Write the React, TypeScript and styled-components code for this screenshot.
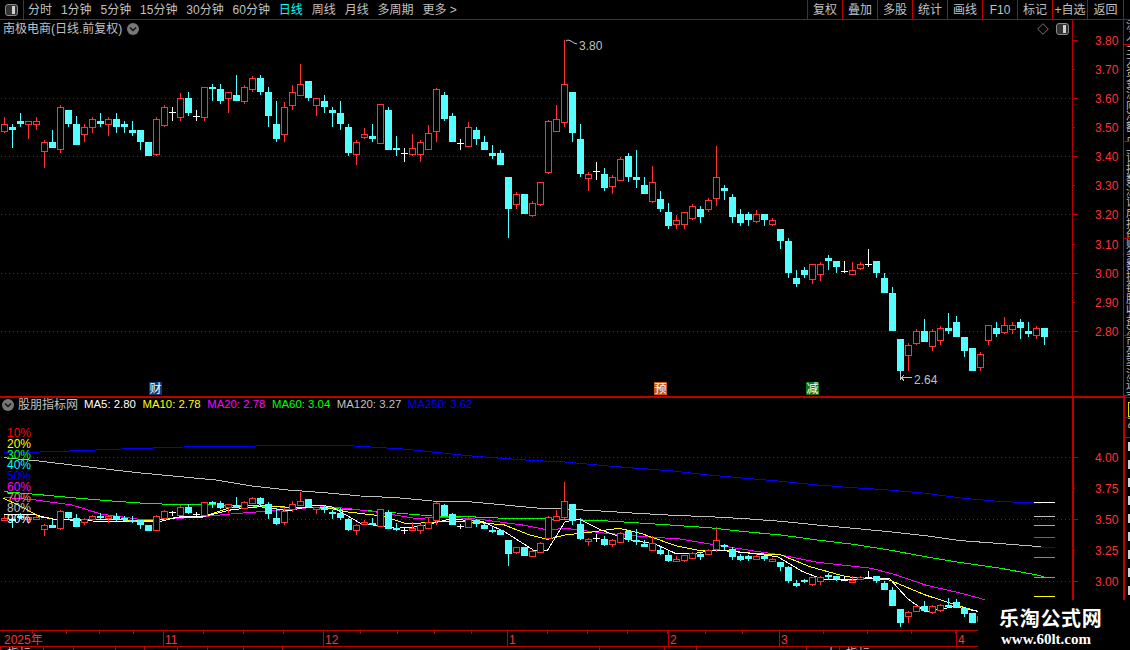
import React from 'react'
import styled, { createGlobalStyle } from 'styled-components'

const RED = '#ff3232'
const LINE_RED = '#c00000'
const GREY = '#c0c0c0'
const CYAN = '#54ffff'
const SANS = `'Liberation Sans', 'Noto Sans CJK SC', sans-serif`

const GlobalStyle = createGlobalStyle`
  html, body {
    margin: 0;
    padding: 0;
    background: #000;
  }
`

const Screen = styled.div`
  position: relative;
  width: 1130px;
  height: 650px;
  overflow: hidden;
  display: flex;
  flex-direction: column;
  background: #000;
  color: ${GREY};
  font: 400 12px/1 ${SANS};
`

const Toolbar = styled.header`
  display: flex;
  align-items: stretch;
  height: 19px;
  flex: none;
  border-bottom: 1px solid ${LINE_RED};
`

const PanelButton = styled.div`
  width: 23px;
  display: flex;
  align-items: center;
  justify-content: center;
  border-right: 1px solid ${LINE_RED};
`

const PeriodList = styled.nav`
  display: flex;
  align-items: center;
  gap: 8.9px;
  padding-left: 4px;
`

const Period = styled.span<{ $active?: boolean }>`
  color: ${(p) => (p.$active ? '#00ffff' : GREY)};
  white-space: nowrap;
`

const ToolGroup = styled.div`
  display: flex;
  margin-left: auto;
`

const ToolButton = styled.div<{ $wide?: boolean }>`
  width: ${(p) => (p.$wide ? 36 : 35)}px;
  box-sizing: border-box;
  display: flex;
  align-items: center;
  justify-content: center;
  border-left: 1px solid ${LINE_RED};
  white-space: nowrap;
`

const ToolEnd = styled.div`
  width: 7px;
  box-sizing: border-box;
  border-left: 1px solid ${LINE_RED};
`

const Workspace = styled.div`
  display: flex;
  flex: 1;
  min-height: 0;
`

const ChartColumn = styled.main`
  width: 1123px;
  display: flex;
  flex-direction: column;
`

const PricePane = styled.section`
  position: relative;
  height: 378px;
  box-sizing: border-box;
  border-bottom: 2px solid ${LINE_RED};
`

const IndicatorPane = styled.section`
  position: relative;
  height: 232px;
`

const ChartSvg = styled.svg`
  display: block;
  width: 1123px;
`

const PaneHeader = styled.div`
  position: absolute;
  top: 2px;
  left: 3px;
  right: 54px;
  display: flex;
  align-items: center;
  gap: 5px;
  height: 14px;
`

const PaneTitle = styled.span`
  white-space: nowrap;
`

const HeaderIcons = styled.div`
  display: flex;
  align-items: center;
  gap: 7px;
  margin-left: auto;
`

const IndicatorHeader = styled.div`
  position: absolute;
  top: 0;
  left: 2px;
  display: flex;
  align-items: center;
  height: 14px;
  gap: 4px;
`

const MaList = styled.div`
  display: flex;
  gap: 6.5px;
  margin-left: 2px;
`

const MaValue = styled.span<{ $color: string }>`
  color: ${(p) => p.$color};
  font-size: 11.4px;
  white-space: nowrap;
`

const PercentScale = styled.ul`
  position: absolute;
  top: 30px;
  left: 7px;
  margin: 0;
  padding: 0;
  list-style: none;
  display: flex;
  flex-direction: column;
`

const PercentItem = styled.li<{ $color: string }>`
  height: 10.75px;
  line-height: 10.75px;
  color: ${(p) => p.$color};
`

const EventBadge = styled.span<{ $left: number; $color: string }>`
  position: absolute;
  left: ${(p) => p.$left}px;
  bottom: 1px;
  width: 13px;
  height: 13px;
  display: flex;
  align-items: center;
  justify-content: center;
  overflow: hidden;
  background: ${(p) => p.$color};
  color: #fff;
  font-size: 12px;
`

const TimeAxis = styled.div`
  display: flex;
  height: 17px;
  box-sizing: border-box;
  flex: none;
  border-top: 1px solid ${LINE_RED};
  border-bottom: 1px solid ${LINE_RED};
`

const MonthCell = styled.div<{ $width: number; $step: number }>`
  width: ${(p) => p.$width}px;
  box-sizing: border-box;
  padding: 3px 0 0 1px;
  color: ${RED};
  border-left: 1px solid ${LINE_RED};
  background-image: repeating-linear-gradient(
    90deg,
    transparent 0 ${(p) => p.$step - 1}px,
    ${LINE_RED} ${(p) => p.$step - 1}px ${(p) => p.$step}px
  );
  background-size: 100% 3px;
  background-repeat: no-repeat;
  &:first-child {
    padding-left: 4px;
    border-left: none;
  }
`

const StatusRow = styled.div`
  display: flex;
  height: 4px;
  overflow: hidden;
`

const StatusCell = styled.div<{ $width: number }>`
  width: ${(p) => p.$width}px;
  flex: none;
  box-sizing: border-box;
  padding-left: 6px;
  border-left: 1px solid ${LINE_RED};
  line-height: 14px;
  white-space: nowrap;
`

const SideStrip = styled.aside`
  width: 7px;
  display: flex;
  flex-direction: column;
  overflow: hidden;
`

const SideBlock = styled.div<{ $height: number; $heavy?: boolean }>`
  height: ${(p) => p.$height}px;
  flex: none;
  box-sizing: border-box;
  overflow: hidden;
  padding-left: 2px;
  border-left: ${(p) => (p.$heavy ? 2 : 1)}px solid ${LINE_RED};
  border-bottom: 1px solid ${LINE_RED};
`

const SideText = styled.div`
  width: 12px;
  font-size: 11px;
  line-height: 11px;
  word-break: break-all;
  color: ${GREY};
`

const SideFlag = styled.div`
  width: 8px;
  height: 15px;
  margin: 4px 0 0 1px;
  box-sizing: border-box;
  border: 1px solid #e0e000;
`

const SideMarks = styled.div`
  flex: 1;
  display: flex;
  flex-direction: column;
  gap: 9px;
  padding: 4px 0 0 3px;
  border-left: 2px solid ${LINE_RED};
`

const SideMark = styled.span`
  display: block;
  width: 3px;
  height: 9px;
  flex: none;
  background: #d4d4d4;
`

const Watermark = styled.div`
  position: absolute;
  right: 0;
  bottom: 0;
  width: 152px;
  height: 50px;
  box-sizing: border-box;
  padding: 7px 0 0 21px;
  background: #000;
  color: #fff;
`

const WatermarkTitle = styled.div`
  font: 700 20px/22px 'Noto Sans CJK SC', sans-serif;
  letter-spacing: 0.7px;
  white-space: nowrap;
`

const WatermarkUrl = styled.div`
  margin: 2px 0 0 2px;
  font: 700 15px/16px 'Liberation Serif', serif;
  white-space: nowrap;
`

const AxisLabel = styled.text`
  fill: ${RED};
  font: 400 12px ${SANS};
`

const PriceNote = styled.text`
  fill: ${GREY};
  font: 400 12px ${SANS};
`

const GridLine = styled.line`
  stroke: ${LINE_RED};
  stroke-dasharray: 1 3;
`

const AxisStroke = styled.path<{ $width?: number }>`
  stroke: ${LINE_RED};
  stroke-width: ${(p) => p.$width ?? 1}px;
  fill: none;
`

const MaLine = styled.polyline<{ $color: string }>`
  fill: none;
  stroke: ${(p) => p.$color};
  stroke-width: 1px;
`

const LegendTick = styled.line<{ $color: string }>`
  stroke: ${(p) => p.$color};
`

// high, body top, body bottom, low, kind. y values are traced at 3x from the price pane
type CandleRow = [number, number, number, number, 'r' | 'c' | 'w']

const CANDLES: CandleRow[] = [
  [352, 373, 392, 398, 'r'], [372, 381, 389, 444, 'c'], [340, 363, 372, 380, 'c'], [363, 364, 373, 417, 'r'],
  [352, 364, 373, 390, 'r'], [420, 427, 452, 503, 'r'], [390, 426, 443, 443, 'c'], [316, 322, 446, 458, 'r'],
  [330, 330, 372, 380, 'c'], [348, 372, 435, 435, 'c'], [372, 382, 401, 426, 'r'], [352, 358, 382, 399, 'r'],
  [340, 363, 372, 381, 'c'], [352, 358, 373, 408, 'r'], [340, 357, 381, 399, 'c'], [363, 372, 381, 399, 'c'],
  [363, 390, 399, 408, 'c'], [390, 390, 426, 450, 'c'], [426, 426, 468, 468, 'c'], [352, 358, 462, 468, 'r'],
  [316, 322, 374, 380, 'r'], [322, 335, 335, 362, 'w'], [280, 295, 350, 362, 'r'], [276, 294, 339, 348, 'c'],
  [330, 349, 349, 362, 'w'], [262, 262, 350, 362, 'r'], [253, 260, 267, 303, 'c'], [252, 267, 303, 312, 'c'],
  [277, 277, 295, 339, 'r'], [225, 285, 303, 303, 'c'], [256, 262, 304, 312, 'r'], [228, 235, 268, 276, 'r'],
  [225, 234, 276, 285, 'c'], [262, 276, 348, 381, 'c'], [303, 372, 417, 426, 'c'], [306, 322, 401, 426, 'r'],
  [255, 277, 314, 330, 'r'], [192, 253, 286, 286, 'r'], [243, 243, 294, 303, 'c'], [295, 295, 314, 348, 'r'],
  [285, 303, 321, 339, 'c'], [321, 330, 339, 381, 'c'], [303, 339, 372, 390, 'c'], [372, 381, 459, 468, 'c'],
  [420, 427, 461, 495, 'r'], [385, 401, 410, 417, 'r'], [372, 408, 417, 426, 'c'], [313, 313, 428, 428, 'r'],
  [321, 330, 450, 450, 'c'], [408, 444, 450, 468, 'c'], [444, 459, 459, 486, 'w'], [403, 444, 461, 468, 'r'],
  [420, 427, 461, 486, 'r'], [376, 400, 446, 450, 'r'], [265, 268, 392, 426, 'r'], [277, 285, 357, 363, 'c'],
  [339, 348, 426, 426, 'c'], [417, 428, 428, 450, 'w'], [366, 382, 437, 437, 'r'], [381, 390, 417, 435, 'c'],
  [408, 426, 450, 450, 'c'], [435, 459, 468, 477, 'c'], [450, 459, 495, 495, 'c'], [531, 531, 627, 713, 'c'],
  [576, 582, 611, 627, 'r'], [582, 582, 642, 642, 'c'], [603, 610, 645, 651, 'r'], [545, 547, 611, 618, 'r'],
  [360, 364, 515, 522, 'r'], [315, 358, 392, 392, 'r'], [120, 253, 365, 380, 'r'], [276, 276, 399, 426, 'c'],
  [372, 417, 522, 531, 'c'], [516, 523, 533, 573, 'r'], [486, 513, 513, 540, 'w'], [504, 522, 564, 573, 'c'],
  [525, 531, 557, 582, 'r'], [470, 477, 541, 541, 'r'], [460, 468, 531, 546, 'c'], [450, 531, 540, 564, 'c'],
  [531, 555, 582, 582, 'c'], [498, 547, 603, 609, 'r'], [573, 597, 627, 635, 'c'], [609, 636, 677, 686, 'c'],
  [645, 660, 672, 686, 'r'], [636, 636, 672, 686, 'r'], [612, 619, 653, 660, 'r'], [618, 627, 651, 668, 'c'],
  [595, 600, 628, 636, 'r'], [438, 532, 594, 617, 'r'], [556, 564, 572, 600, 'c'], [582, 591, 650, 668, 'c'],
  [627, 642, 669, 678, 'c'], [636, 642, 660, 678, 'c'], [630, 642, 663, 669, 'r'], [642, 642, 660, 678, 'c'],
  [654, 660, 672, 678, 'r'], [687, 687, 723, 747, 'c'], [714, 723, 819, 834, 'c'], [810, 834, 852, 861, 'c'],
  [801, 810, 825, 834, 'c'], [793, 793, 837, 852, 'r'], [786, 793, 821, 843, 'r'], [765, 774, 783, 810, 'c'],
  [783, 783, 801, 819, 'c'], [783, 813, 813, 819, 'w'], [786, 810, 821, 825, 'r'], [786, 793, 804, 810, 'r'],
  [747, 793, 793, 801, 'w'], [783, 783, 819, 834, 'c'], [819, 834, 879, 879, 'c'], [861, 879, 993, 993, 'c'],
  [1017, 1017, 1113, 1140, 'c'], [1029, 1035, 1065, 1113, 'r'], [987, 993, 1029, 1035, 'r'], [957, 993, 1026, 1026, 'c'],
  [987, 993, 1038, 1053, 'r'], [978, 984, 1020, 1035, 'r'], [939, 984, 993, 1002, 'c'], [948, 966, 1011, 1011, 'c'],
  [1011, 1011, 1053, 1071, 'c'], [1044, 1044, 1113, 1113, 'c'], [1056, 1062, 1100, 1113, 'r'], [975, 975, 1020, 1035, 'r'],
  [966, 984, 1002, 1011, 'c'], [951, 975, 996, 1002, 'r'], [966, 975, 987, 1002, 'r'], [957, 966, 984, 1017, 'c'],
  [966, 993, 1002, 1011, 'c'], [978, 984, 1004, 1017, 'r'], [984, 984, 1011, 1035, 'c'],
]

type Point = [number, number]

// curves were read off two crops of the lower pane (x 2.775x, y 3x from 390)
function traced(left: Point[], right: Point[]): string {
  const a = left.map(([x, y]) => `${(x / 2.775).toFixed(1)},${(390 + y / 3).toFixed(1)}`)
  const b = right.map(([x, y]) => `${(565 + x / 2.775).toFixed(1)},${(390 + y / 3).toFixed(1)}`)
  return [...a, ...b].join(' ')
}

const MA_LINES = [
  {
    color: '#0000ff',
    points: traced(
      [[10, 188], [110, 186], [220, 182], [310, 178], [400, 175], [510, 171], [660, 169], [820, 166], [950, 166], [1060, 173], [1130, 178], [1200, 186], [1310, 198], [1380, 204], [1470, 211]],
      [[0, 216], [100, 226], [200, 235], [300, 243], [400, 255], [500, 265], [600, 274], [700, 285], [800, 293], [900, 300], [1000, 310], [1100, 324], [1200, 334], [1320, 340]],
    ),
  },
  {
    color: GREY,
    points: traced(
      [[10, 203], [100, 212], [200, 225], [300, 238], [400, 250], [500, 260], [600, 270], [700, 288], [800, 300], [900, 308], [1000, 318], [1100, 323], [1200, 333], [1300, 335], [1400, 345], [1500, 355]],
      [[0, 357], [100, 363], [200, 370], [300, 376], [400, 380], [500, 386], [600, 394], [700, 405], [800, 415], [900, 425], [1000, 437], [1100, 452], [1200, 460], [1320, 470]],
    ),
  },
  {
    color: '#00ff00',
    points: traced(
      [[10, 305], [100, 313], [200, 323], [300, 332], [400, 340], [500, 344], [600, 345], [700, 348], [800, 352], [900, 355], [1000, 360], [1100, 369], [1200, 378], [1300, 380], [1400, 385]],
      [[0, 388], [120, 393], [250, 402], [400, 413], [500, 425], [600, 435], [700, 450], [800, 463], [900, 480], [1000, 500], [1100, 518], [1200, 533], [1300, 553], [1330, 560]],
    ),
  },
  {
    color: '#ff00ff',
    points: traced(
      [[10, 322], [100, 330], [200, 345], [280, 372], [400, 390], [500, 385], [580, 378], [640, 372], [720, 365], [800, 358], [900, 350], [960, 355], [1050, 367], [1150, 385], [1250, 382], [1330, 388], [1450, 405], [1520, 420]],
      [[0, 415], [100, 428], [220, 440], [320, 447], [420, 465], [520, 482], [600, 495], [700, 517], [850, 535], [920, 555], [1000, 585], [1100, 610], [1165, 629]],
    ),
  },
  {
    color: '#ffff00',
    points: traced(
      [[10, 325], [60, 350], [110, 380], [150, 388], [300, 388], [400, 393], [500, 382], [560, 382], [640, 352], [720, 345], [800, 352], [900, 352], [960, 365], [1060, 378], [1130, 402], [1220, 395], [1300, 395], [1400, 405], [1470, 435], [1520, 448]],
      [[0, 435], [60, 428], [150, 415], [210, 430], [310, 468], [380, 483], [450, 482], [520, 490], [600, 495], [680, 530], [780, 560], [900, 570], [1000, 615], [1100, 650], [1146, 664]],
    ),
  },
  {
    color: '#ffffff',
    points: traced(
      [[10, 372], [100, 375], [150, 388], [300, 395], [400, 395], [440, 395], [500, 380], [570, 378], [640, 360], [720, 350], [800, 362], [880, 345], [920, 350], [1000, 400], [1100, 415], [1160, 410], [1250, 387], [1340, 395], [1400, 425], [1480, 480], [1520, 480]],
      [[0, 395], [40, 388], [100, 420], [170, 448], [250, 462], [310, 492], [360, 490], [420, 480], [500, 488], [590, 500], [660, 545], [720, 570], [900, 565], [950, 625], [1000, 665], [1080, 650], [1146, 664]],
    ),
  },
]

const PERIODS = ['分时', '1分钟', '5分钟', '15分钟', '30分钟', '60分钟', '日线', '周线', '月线', '多周期', '更多 >']
const TOOLS = ['复权', '叠加', '多股', '统计', '画线', 'F10', '标记', '+自选', '返回']
const MA_VALUES = [
  { label: 'MA5: 2.80', color: '#ffffff' },
  { label: 'MA10: 2.78', color: '#ffff00' },
  { label: 'MA20: 2.78', color: '#ff00ff' },
  { label: 'MA60: 3.04', color: '#00ff00' },
  { label: 'MA120: 3.27', color: GREY },
  { label: 'MA250: 3.62', color: '#0000ff' },
]
const PERCENTS = [
  { label: '10%', color: '#ff0000' },
  { label: '20%', color: '#ffff00' },
  { label: '30%', color: '#00ff00' },
  { label: '40%', color: '#00ffff' },
  { label: '50%', color: '#0000ff' },
  { label: '60%', color: '#ff00ff' },
  { label: '70%', color: '#ff8080' },
  { label: '80%', color: GREY },
  { label: '90%', color: '#ffffff' },
]
const LEGEND_TICKS = [
  { y: 502.5, color: '#ffffff' },
  { y: 516.5, color: GREY },
  { y: 525.5, color: '#ff8080' },
  { y: 537.5, color: '#ff00ff' },
  { y: 547.5, color: '#0000ff' },
  { y: 557.5, color: '#00c0c0' },
  { y: 577.5, color: '#00ff00' },
  { y: 596.5, color: '#ffff00' },
]
const MONTHS = [
  { label: '2025年', width: 163, step: 33.5 },
  { label: '11', width: 160, step: 40 },
  { label: '12', width: 184, step: 37 },
  { label: '1', width: 161, step: 40 },
  { label: '2', width: 111, step: 37 },
  { label: '3', width: 177, step: 44 },
  { label: '4', width: 167, step: 40 },
]
const STATUS = [
  { label: '指标', width: 43 },
  { label: '', width: 30 },
  { label: '', width: 42 },
  { label: '', width: 29 },
  { label: '', width: 33 },
  { label: '', width: 30 },
  { label: '', width: 36 },
  { label: '', width: 39 },
  { label: '', width: 317 },
  { label: '', width: 65 },
  { label: '', width: 32 },
  { label: '', width: 110 },
  { label: '　十', width: 33 },
  { label: '指标', width: 32 },
]

const TOP_GRID = [98.5, 156.5, 214.5, 273.5, 331.5]
const TOP_SCALE = [
  { y: 40.5, label: '3.80', major: true },
  { y: 69.5, label: '3.70' },
  { y: 98.5, label: '3.60', major: true },
  { y: 127.5, label: '3.50' },
  { y: 156.5, label: '3.40', major: true },
  { y: 185.5, label: '3.30' },
  { y: 214.5, label: '3.20', major: true },
  { y: 244.5, label: '3.10' },
  { y: 273.5, label: '3.00', major: true },
  { y: 302.5, label: '2.90' },
  { y: 331.5, label: '2.80', major: true },
]
const LOW_GRID = [457.5, 519.5, 581.5]
const LOW_SCALE = [
  { y: 457.5, label: '4.00', major: true },
  { y: 488.5, label: '3.75' },
  { y: 519.5, label: '3.50', major: true },
  { y: 550.5, label: '3.25' },
  { y: 581.5, label: '3.00', major: true },
]

const SIDE_BLOCKS = [
  { height: 25, text: '流入' },
  { height: 97, text: '主力资金流向净额占比换手振幅' },
  { height: 97, text: '上证指数深证成指创业板块涨幅' },
  { height: 97, text: '财务数据每股收益净资产总股本' },
  { height: 60, text: '市盈率流通市值' },
]

const candleY = (v: number) => Math.round(v / 3)
const lowerY = (v: number) => Math.round(581.3 - 0.426 * (273.4 - v / 3))

function Candles({ toY }: { toY: (v: number) => number }) {
  return (
    <g shapeRendering="crispEdges">
      {CANDLES.map(([high, top, bottom, low, kind], i) => {
        const x = 8 * i + 1
        const mid = x + 3.5
        const [yh, yt, yb, yl] = [toY(high), toY(top), toY(bottom), toY(low)]
        if (kind === 'w') {
          return (
            <g key={i} stroke="#fff">
              <line x1={mid} x2={mid} y1={yh} y2={yl} />
              <line x1={x} x2={x + 7} y1={yt + 0.5} y2={yt + 0.5} />
            </g>
          )
        }
        if (kind === 'c') {
          return (
            <g key={i}>
              <line x1={mid} x2={mid} y1={yh} y2={yl} stroke={CYAN} />
              <rect x={x} y={yt} width={7} height={Math.max(yb - yt, 2)} fill={CYAN} />
            </g>
          )
        }
        return (
          <g key={i} stroke={RED}>
            <line x1={mid} x2={mid} y1={yh} y2={yt} />
            <line x1={mid} x2={mid} y1={yb} y2={yl} />
            <rect x={x + 0.5} y={yt + 0.5} width={6} height={Math.max(yb - yt, 2)} fill="#000" />
          </g>
        )
      })}
    </g>
  )
}

function PriceScale({ rows, grid, axisWidth, top, bottom }: {
  rows: { y: number; label: string; major?: boolean }[]
  grid: number[]
  axisWidth: number
  top: number
  bottom: number
}) {
  return (
    <g shapeRendering="crispEdges">
      {grid.map((y) => (
        <GridLine key={y} x1={1} x2={1072} y1={y} y2={y} />
      ))}
      <AxisStroke $width={axisWidth} d={`M${axisWidth === 2 ? 1073 : 1072.5} ${top}V${bottom}`} />
      {rows.map((row) => (
        <React.Fragment key={row.label}>
          <AxisStroke d={`M1073 ${row.y}H${row.major ? 1078 : 1075}`} />
          <AxisLabel x={1095} y={row.y + 4.5}>{row.label}</AxisLabel>
        </React.Fragment>
      ))}
    </g>
  )
}

function ChevronBadge() {
  return (
    <svg width="12" height="12" viewBox="0 0 12 12">
      <circle cx="6" cy="6" r="6" fill="#777" />
      <path d="M3 4.5 6 7.5 9 4.5" fill="none" stroke="#111" strokeWidth="1.4" />
    </svg>
  )
}

function PanelIcon({ size }: { size: number }) {
  return (
    <svg width={size} height={size - 1} viewBox="0 0 13 12">
      <rect x="0.5" y="0.5" width="12" height="11" rx="2.5" fill="#333" stroke="#8a8a8a" />
      <rect x="7" y="2" width="3" height="8" fill="#d0d0d0" />
    </svg>
  )
}

function DiamondIcon() {
  return (
    <svg width="12" height="12" viewBox="0 0 12 12">
      <path d="M6 .7 11.3 6 6 11.3 .7 6Z" fill="none" stroke="#777" />
    </svg>
  )
}

export default function App() {
  return (
    <Screen>
      <GlobalStyle />
      <Toolbar>
        <PanelButton>
          <PanelIcon size={13} />
        </PanelButton>
        <PeriodList>
          {PERIODS.map((p) => (
            <Period key={p} $active={p === '日线'}>{p}</Period>
          ))}
        </PeriodList>
        <ToolGroup>
          {TOOLS.map((t) => (
            <ToolButton key={t} $wide={t === '返回'}>{t}</ToolButton>
          ))}
          <ToolEnd />
        </ToolGroup>
      </Toolbar>
      <Workspace>
        <ChartColumn>
          <PricePane>
            <ChartSvg height={376} viewBox="0 20 1123 376">
              <PriceScale rows={TOP_SCALE} grid={TOP_GRID} axisWidth={1} top={20} bottom={396} />
              <Candles toY={candleY} />
              <path d="M566 41l2-1 3 1 3 2 3 1" fill="none" stroke={GREY} />
              <PriceNote x={579} y={49.5}>3.80</PriceNote>
              <path d="M900.5 372V379M901 377.5H912M901 377.5l3-2M901 377.5l3 3" fill="none" stroke={GREY} shapeRendering="crispEdges" />
              <PriceNote x={914} y={383.5}>2.64</PriceNote>
            </ChartSvg>
            <PaneHeader>
              <PaneTitle>南极电商(日线.前复权)</PaneTitle>
              <ChevronBadge />
              <HeaderIcons>
                <DiamondIcon />
                <PanelIcon size={13} />
              </HeaderIcons>
            </PaneHeader>
            <EventBadge $left={149} $color="#0a3c72">财</EventBadge>
            <EventBadge $left={654} $color="#c05a10">预</EventBadge>
            <EventBadge $left={806} $color="#0a7a14">减</EventBadge>
          </PricePane>
          <IndicatorPane>
            <ChartSvg height={232} viewBox="0 398 1123 232">
              <PriceScale rows={LOW_SCALE} grid={LOW_GRID} axisWidth={2} top={398} bottom={630} />
              <g shapeRendering="crispEdges">
                {MA_LINES.map((m) => (
                  <MaLine key={m.color} $color={m.color} points={m.points} />
                ))}
                {LEGEND_TICKS.map((t) => (
                  <LegendTick key={t.y} $color={t.color} x1={1034} x2={1055} y1={t.y} y2={t.y} />
                ))}
              </g>
              <Candles toY={lowerY} />
            </ChartSvg>
            <IndicatorHeader>
              <ChevronBadge />
              <PaneTitle>股朋指标网</PaneTitle>
              <MaList>
                {MA_VALUES.map((m) => (
                  <MaValue key={m.label} $color={m.color}>{m.label}</MaValue>
                ))}
              </MaList>
            </IndicatorHeader>
            <PercentScale>
              {PERCENTS.map((p) => (
                <PercentItem key={p.label} $color={p.color}>{p.label}</PercentItem>
              ))}
            </PercentScale>
          </IndicatorPane>
          <TimeAxis>
            {MONTHS.map((m) => (
              <MonthCell key={m.label} $width={m.width} $step={m.step}>{m.label}</MonthCell>
            ))}
          </TimeAxis>
          <StatusRow>
            {STATUS.map((s, i) => (
              <StatusCell key={i} $width={s.width}>{s.label}</StatusCell>
            ))}
          </StatusRow>
        </ChartColumn>
        <SideStrip>
          {SIDE_BLOCKS.map((b) => (
            <SideBlock key={b.text} $height={b.height}>
              <SideText>{b.text}</SideText>
            </SideBlock>
          ))}
          <SideBlock $height={2} $heavy />
          <SideBlock $height={20} $heavy>
            <SideFlag />
          </SideBlock>
          <SideBlock $height={20} $heavy>
            <SideText>乙</SideText>
          </SideBlock>
          <SideMarks>
            {Array.from({ length: 12 }, (_, i) => (
              <SideMark key={i} />
            ))}
          </SideMarks>
        </SideStrip>
      </Workspace>
      <Watermark>
        <WatermarkTitle>乐淘公式网</WatermarkTitle>
        <WatermarkUrl>www.60lt.com</WatermarkUrl>
      </Watermark>
    </Screen>
  )
}
